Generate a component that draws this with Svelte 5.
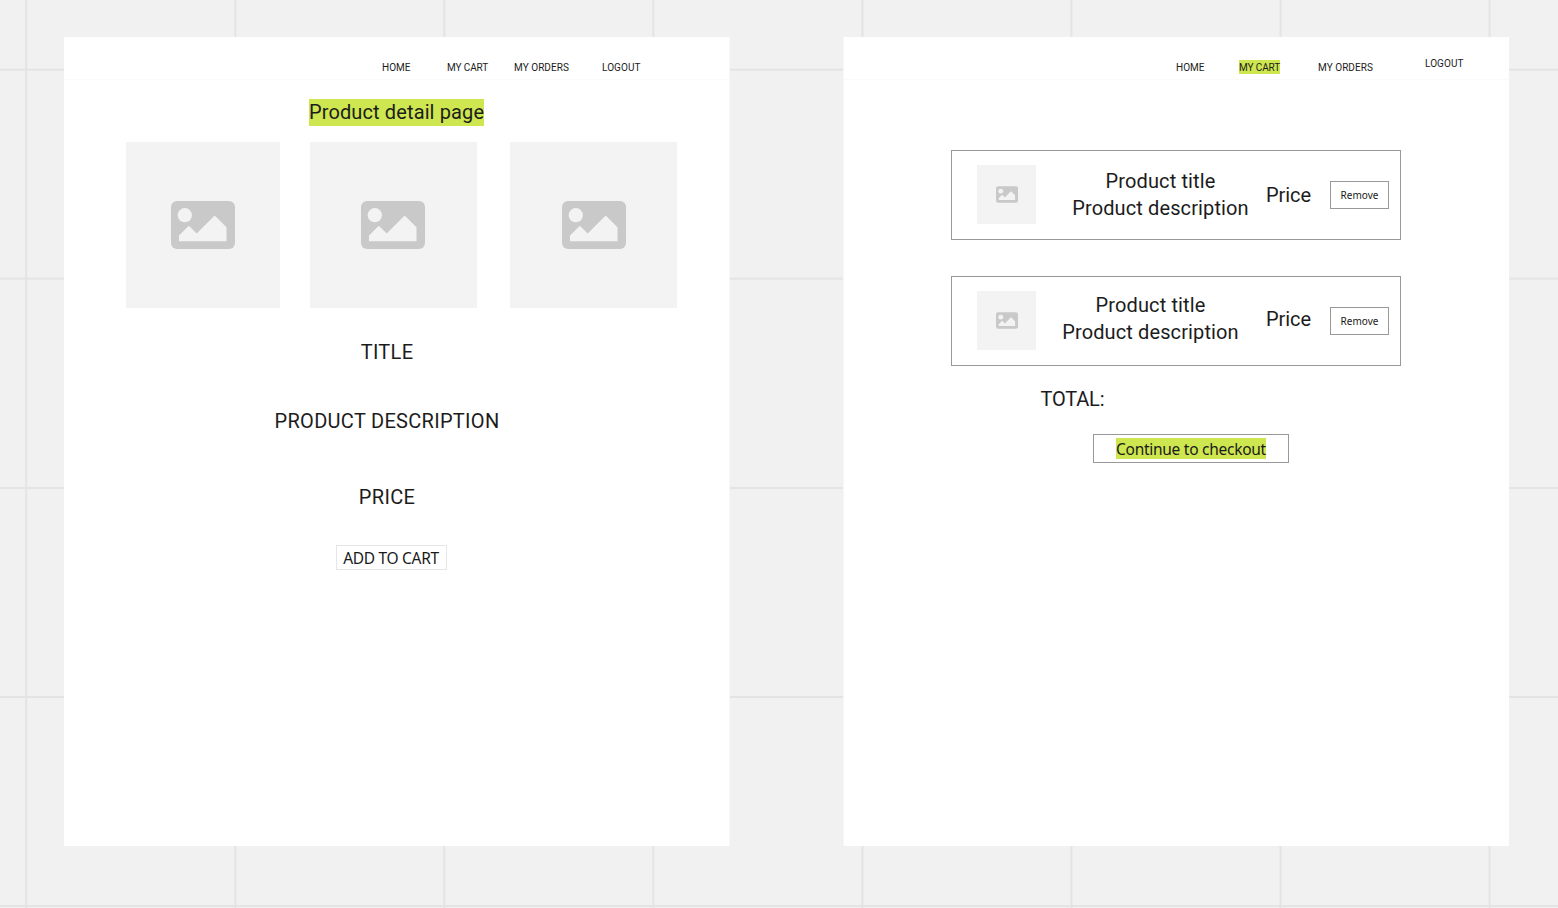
<script>
  const pitch = 209.05;
  const columns = Array.from({ length: 8 }, (_, i) => 26.2 + i * pitch);
  const rows = Array.from({ length: 5 }, (_, i) => 69.8 + i * pitch);
  const items = ['first', 'second'];
</script>

{#snippet picture()}
  <svg class="picture" viewBox="0 0 64 48" aria-hidden="true">
    <rect width="64" height="48" rx="6" fill="#c9c9c9" />
    <circle cx="13.8" cy="14.2" r="7.1" fill="#f3f3f3" />
    <path
      d="M8 34.6 17 25.4Q17.8 24.6 18.6 25.4L25.7 32.4 42.9 15.3Q43.7 14.5 44.5 15.3L55.5 26.2V40.2H8Z"
      fill="#f3f3f3"
    />
  </svg>
{/snippet}

<div class="canvas">
  <svg class="lines" width="1558" height="908" aria-hidden="true">
    {#each columns as x}
      <line x1={x} x2={x} y1="0" y2="908" />
    {/each}
    {#each rows as y}
      <line x1="0" x2="1558" y1={y} y2={y} />
    {/each}
  </svg>

  <main class="frame detail">
    <nav>
      <span class="home">HOME</span>
      <span class="cart">MY CART</span>
      <span class="orders">MY ORDERS</span>
      <span class="logout">LOGOUT</span>
    </nav>
    <h1><span class="mark">Product detail page</span></h1>
    <div class="gallery">
      <div class="tile">{@render picture()}</div>
      <div class="tile">{@render picture()}</div>
      <div class="tile">{@render picture()}</div>
    </div>
    <div class="info">
      <p class="title">TITLE</p>
      <p class="description">PRODUCT DESCRIPTION</p>
      <p class="price">PRICE</p>
    </div>
    <button class="add">ADD TO CART</button>
  </main>

  <main class="frame basket">
    <nav>
      <span class="home">HOME</span>
      <span class="cart mark">MY CART</span>
      <span class="orders">MY ORDERS</span>
      <span class="logout">LOGOUT</span>
    </nav>
    <div class="list">
      {#each items as item}
        <div class="item {item}">
          <div class="thumb">{@render picture()}</div>
          <div class="text">
            <p class="name">Product title</p>
            <p class="about">Product description</p>
          </div>
          <p class="cost">Price</p>
          <button class="remove">Remove</button>
        </div>
      {/each}
    </div>
    <p class="total">TOTAL:</p>
    <button class="checkout"><span class="mark">Continue to checkout</span></button>
  </main>
</div>

<style>
  :global(body) {
    margin: 0;
    overflow: hidden;
  }
  .canvas {
    position: relative;
    width: 1558px;
    height: 908px;
    overflow: hidden;
    background: #f1f1f1;
    color: #1c1c1c;
    font: 20px/27px Roboto, sans-serif;
    white-space: nowrap;
  }
  .lines {
    display: block;
    stroke: #e4e4e4;
    stroke-width: 2;
  }
  .frame {
    position: absolute;
    top: 37px;
    width: 665px;
    height: 809px;
    display: flex;
    flex-direction: column;
    background: #fff;
  }
  .detail {
    left: 64px;
    box-shadow: 1px 0 #f7f7f7;
  }
  .basket {
    left: 844px;
    box-shadow: -1px 0 #f7f7f7;
  }
  p,
  h1 {
    margin: 0;
    font-size: 20px;
    font-weight: 400;
  }
  button {
    box-sizing: border-box;
    display: flex;
    align-items: center;
    justify-content: center;
    padding: 0;
    background: #fff;
    color: #1a1a1a;
    font-family: 'Noto Sans', sans-serif;
  }
  .mark {
    background: #cee64f;
  }
  nav {
    box-sizing: border-box;
    height: 43px;
    display: flex;
    padding-top: 23px;
    border-bottom: 1px solid #fafafa;
    font-size: 10px;
    line-height: 16px;
  }
  nav span {
    height: 14px;
  }
  .home {
    width: 28px;
    margin-left: 318px;
  }
  .cart {
    width: 41px;
    margin-left: 37px;
    letter-spacing: -0.1px;
  }
  .orders {
    width: 55px;
    margin-left: 26px;
    letter-spacing: 0.05px;
  }
  .logout {
    width: 39px;
    margin-left: 33px;
    letter-spacing: 0.08px;
  }
  .basket .home {
    margin-left: 332px;
  }
  .basket .cart {
    margin-left: 35px;
  }
  .basket .orders {
    margin-left: 38px;
  }
  .basket .logout {
    margin: -4px 0 0 52px;
  }
  h1 {
    display: flex;
    margin: 19px 0 0 245px;
  }
  h1 .mark {
    width: 175px;
    letter-spacing: 0.12px;
  }
  .gallery {
    display: grid;
    grid-template-columns: 154px 167px 167px;
    grid-template-rows: 166px;
    column-gap: 30px;
    margin: 16px 0 0 62px;
  }
  .tile,
  .thumb {
    display: flex;
    align-items: center;
    justify-content: center;
    background: #f3f3f3;
  }
  .tile:last-child {
    margin: 0 -3px 0 3px;
  }
  .picture {
    width: 64px;
    height: 48px;
  }
  .tile:nth-child(2) .picture {
    margin-right: 1px;
  }
  .info {
    width: 300px;
    display: flex;
    flex-direction: column;
    margin: 31px 0 0 173px;
    text-align: center;
    letter-spacing: 0.3px;
  }
  .description {
    margin-top: 42px;
  }
  .price {
    margin-top: 49px;
  }
  .add {
    width: 111px;
    height: 25px;
    margin: 34px 0 0 272px;
    padding: 1px 1px 0 0;
    border: 1px solid #e6e6e6;
    font-size: 15.5px;
    line-height: 22px;
    letter-spacing: -0.3px;
  }
  .list {
    display: flex;
    flex-direction: column;
    gap: 36px;
    width: 450px;
    margin: 70px 0 0 107px;
  }
  .item {
    box-sizing: border-box;
    width: 450px;
    height: 90px;
    display: flex;
    border: 1px solid #999;
  }
  .thumb {
    width: 59px;
    height: 59px;
    margin: 14px 0 0 25px;
  }
  .thumb .picture {
    width: 22px;
    height: 17px;
  }
  .text {
    width: 178px;
    margin: 17px 0 0 35.5px;
    text-align: center;
    letter-spacing: 0.12px;
  }
  .cost {
    width: 46px;
    margin: 31px 0 0 16.5px;
    letter-spacing: -0.05px;
  }
  .second .text {
    margin: 15px 0 0 25.5px;
  }
  .second .cost {
    margin: 29px 0 0 26.5px;
  }
  .remove {
    flex: none;
    width: 59px;
    height: 28px;
    margin: 30px 0 0 18px;
    border: 1px solid #999;
    font-size: 10px;
  }
  .total {
    margin: 20px 0 0 196.5px;
    letter-spacing: -0.2px;
  }
  .checkout {
    width: 196px;
    height: 29px;
    margin: 21px 0 0 249px;
    border: 1px solid #999;
    font-size: 15.5px;
    line-height: 22px;
    letter-spacing: -0.27px;
  }
  .checkout .mark {
    width: 150px;
    height: 21px;
    text-align: left;
  }
</style>
